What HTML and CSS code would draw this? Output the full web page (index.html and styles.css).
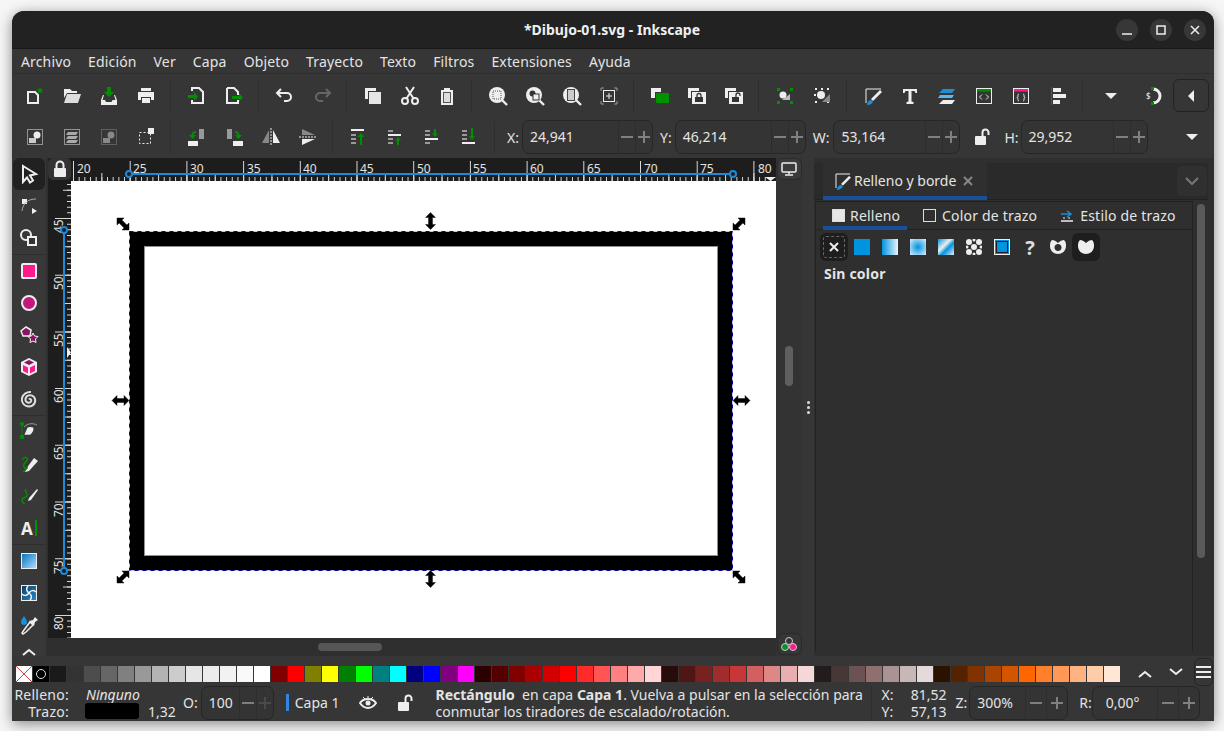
FILE: index.html
```html
<!DOCTYPE html>
<html lang="en">
<head>
    <meta charset="UTF-8">
    <meta name="viewport" content="width=device-width, initial-scale=1.0">
    <title>Inkscape</title>
    <link rel="stylesheet" href="styles.css">
</head>
<body>
    <svg class="defs" width="0" height="0">
        <defs>
            <g id="arrow"><path d="M-8.5 0L-3.5-5V-2H3.5V-5L8.5 0L3.500 5V2H-3.500V5Z" fill="#000" stroke="#000" stroke-width=".4"/></g>
            <g id="lens"><circle cx="9" cy="9" r="8"/><path d="M14 14l5 5" stroke="#eee" stroke-width="2.4"/></g>
            <g id="lockshape"><rect x="3" y="8" width="12" height="9" rx="1"/><path d="M5.5 8V5a3.5 3.5 0 0 1 7 0V8" fill="none" stroke="#eee" stroke-width="2"/></g>
            <g id="openlock"><rect x="2" y="8" width="11" height="9" rx="1"/><path d="M9.5 8V4.5a3 3 0 0 1 6 0V7" fill="none" stroke="#eee" stroke-width="2"/></g>
        </defs>
    </svg>

    <div class="window">
        <header class="titlebar">
            <span class="title">*Dibujo-01.svg - Inkscape</span>
            <div class="win-buttons">
                <span class="win-btn"><svg width="12" height="12"><path d="M1 10h10" stroke="#eee" stroke-width="1.5"/></svg></span>
                <span class="win-btn"><svg width="12" height="12"><rect x="2" y="2" width="8" height="8" fill="none" stroke="#eee" stroke-width="1.5"/></svg></span>
                <span class="win-btn"><svg width="12" height="12"><path d="M2 2l8 8M10 2l-8 8" stroke="#eee" stroke-width="1.5"/></svg></span>
            </div>
        </header>

        <nav class="menubar">
            <span>Archivo</span><span>Edición</span><span>Ver</span><span>Capa</span><span>Objeto</span><span>Trayecto</span><span>Texto</span><span>Filtros</span><span>Extensiones</span><span>Ayuda</span>
        </nav>

        <div class="toolbar commands">
            <span class="tb"><svg width="20" height="20"><path d="M3 6h7l3 3v8H3z" fill="none" stroke="#eee" stroke-width="2"/><path d="M15 1l1 2.500h2.500l-2 1.700.8 2.600-2.300-1.500-2.300 1.500.8-2.600-2-1.700H14z" fill="#008f00"/></svg></span>
            <span class="tb"><svg width="20" height="20"><path d="M2 3h6l2 2h5v2H5L2 12z" fill="#eee"/><path d="M5 8h14l-3 9H2z" fill="#ddd"/></svg></span>
            <span class="tb"><svg width="20" height="20"><path d="M8 1h4v5h3l-5 5-5-5h3z" fill="#008f00"/><path d="M4 9l-2 5v5h16v-5l-2-5h-1l1.500 5h-3l-1 2H7l-1-2H3.500L5 9z" fill="#eee"/></svg></span>
            <span class="tb"><svg width="20" height="20"><path d="M5 2h10v3H5zM2 6h16v8h-3v-3H5v3H2zM6 12h8v5H6z" fill="#eee"/></svg></span>
            <i class="sep"></i>
            <span class="tb"><svg width="20" height="20"><path d="M5 5V2h7l4 4v11H5v-3" fill="none" stroke="#eee" stroke-width="2"/><path d="M1 9h6V6l4 4.500L7 15v-3H1z" fill="#008f00"/></svg></span>
            <span class="tb"><svg width="20" height="20"><path d="M3 2h7l4 4v3M14 14v3H3V2" fill="none" stroke="#eee" stroke-width="2"/><path d="M8 10h7V7l4 4.500L15 16v-3H8z" fill="#008f00"/></svg></span>
            <i class="sep"></i>
            <span class="tb"><svg width="20" height="20"><path d="M6 3L2 7l4 4M2 7h10a4 4 0 0 1 0 8H9" fill="none" stroke="#eee" stroke-width="2"/></svg></span>
            <span class="tb"><svg width="20" height="20"><path d="M14 3l4 4-4 4M18 7H8a4 4 0 0 0 0 8h3" fill="none" stroke="#666" stroke-width="2"/></svg></span>
            <i class="sep"></i>
            <span class="tb"><svg width="20" height="20"><path d="M2 2h11v3H5v8H2z" fill="#eee"/><path d="M6 6h12v12H6z" fill="#e6e6e6"/></svg></span>
            <span class="tb"><svg width="20" height="20"><circle cx="5" cy="15" r="3" fill="none" stroke="#eee" stroke-width="2"/><circle cx="15" cy="15" r="3" fill="none" stroke="#eee" stroke-width="2"/><path d="M6.500 12.500L14 1M13.500 12.500L6 1" stroke="#eee" stroke-width="2"/></svg></span>
            <span class="tb"><svg width="20" height="20"><path d="M7 2h6v2h3v15H4V4h3z" fill="#eee"/><path d="M6 6h8v11H6z" fill="#555"/><path d="M7 7h6v9H7z" fill="#ddd"/></svg></span>
            <i class="sep"></i>
            <span class="tb"><svg width="20" height="20"><use href="#lens" fill="#eee"/><rect x="5" y="5" width="8" height="8" fill="none" stroke="#555" stroke-dasharray="1 1"/></svg></span>
            <span class="tb"><svg width="20" height="20"><use href="#lens" fill="#eee"/><circle cx="7.500" cy="7.500" r="3" fill="#333"/><rect x="8" y="8" width="6" height="6" fill="#eee" stroke="#333"/></svg></span>
            <span class="tb"><svg width="20" height="20"><use href="#lens" fill="#eee"/><rect x="5.500" y="3.500" width="7" height="11" fill="#ccc" stroke="#444"/></svg></span>
            <span class="tb"><svg width="20" height="20"><path d="M2 5V2h3M15 2h3v3M18 15v3h-3M5 18H2v-3" fill="none" stroke="#999"/><rect x="4.500" y="4.500" width="11" height="11" fill="none" stroke="#eee"/><path d="M7 10h6M10 7v6" stroke="#eee"/></svg></span>
            <i class="sep"></i>
            <span class="tb"><svg width="20" height="20"><path d="M1 2h10v4H5v6H1z" fill="#eee"/><path d="M6 7h13v10H6z" fill="#009100"/></svg></span>
            <span class="tb"><svg width="20" height="20"><path d="M1 2h11v3H4v7H1z" fill="#eee"/><path d="M5 6h14v12H5z" fill="#eee"/><rect x="8" y="11" width="8" height="5" fill="#333"/><path d="M10 11V9.500a2 2 0 0 1 4 0V11" fill="none" stroke="#333" stroke-width="1.300"/></svg></span>
            <span class="tb"><svg width="20" height="20"><path d="M1 2h11v3H4v7H1z" fill="#eee"/><path d="M5 6h14v12H5z" fill="#eee"/><rect x="8" y="11" width="7" height="5" fill="#333"/><path d="M12 11V9a2 2 0 0 1 4 0v1" fill="none" stroke="#333" stroke-width="1.300"/></svg></span>
            <i class="sep"></i>
            <span class="tb"><svg width="20" height="20"><path d="M2 2h3v3H2zM15 2h3v3h-3zM2 15h3v3H2zM15 15h3v3h-3z" fill="#009100"/><circle cx="8" cy="9" r="3.500" fill="#eee"/><path d="M15 8v6H7z" fill="#bbb"/></svg></span>
            <span class="tb"><svg width="20" height="20"><path d="M3 3h2M15 3h2M3 16h2M15 16h2M2 9h2M10 2v2" stroke="#eee" stroke-width="2"/><circle cx="9" cy="9" r="4" fill="#eee"/><path d="M18 8v8h-8z" fill="#888"/></svg></span>
            <i class="sep"></i>
            <span class="tb"><svg width="20" height="20"><path d="M3 17V3h15" fill="none" stroke="#eee" stroke-width="1"/><path d="M8 13L17 4l2 2-9 9z" fill="#eee"/><path d="M4 19c0-3 2-5 4-5l2 2c-1 2-3 3-6 3z" fill="#1c8fd6"/></svg></span>
            <span class="tb"><svg width="20" height="20"><path d="M3 3h14v4h-1.500l-1-2H11.500v10.500l2 .5V18H6.500v-2l2-.5V5H5.500l-1 2H3z" fill="#eee"/></svg></span>
            <span class="tb"><svg width="20" height="20"><path d="M6 3h12l-3 4H2z" fill="#1c8fd6"/><path d="M3 9h14l-2 3H1z" fill="#5bb8ee"/><path d="M6 14h12l-3 4H2z" fill="#eee"/></svg></span>
            <span class="tb"><svg width="20" height="20"><rect x="2.500" y="2.500" width="15" height="15" fill="none" stroke="#eee"/><path d="M3 3h14v2.500H3z" fill="#008f00"/><path d="M8 8.500L5.500 11 8 13.500M12 8.500l2.500 2.500-2.500 2.500" fill="none" stroke="#ddd"/></svg></span>
            <span class="tb"><svg width="20" height="20"><rect x="2.500" y="2.500" width="15" height="15" fill="none" stroke="#eee"/><path d="M3 3h14v2.500H3z" fill="#ff1a8c"/><path d="M8 8c-1.500 0-1 2-1 3-.5 0-1 .3-1 .5s.5.500 1 .5c0 1-.5 3 1 3M12 8c1.500 0 1 2 1 3 .5 0 1 .3 1 .5s-.5.500-1 .5c0 1 .5 3-1 3" fill="none" stroke="#ddd"/></svg></span>
            <span class="tb"><svg width="20" height="20"><path d="M3.500 1v18" stroke="#008f00"/><path d="M5 2h8v4H5zM5 8h13v4H5zM5 14h7v4H5z" fill="#eee"/></svg></span>
            <i class="sep"></i>
            <span class="tb caret-btn"><svg width="14" height="8"><path d="M1 1h12L7 7z" fill="#eee"/></svg></span>
            <span class="tb snap"><svg width="20" height="20"><path d="M9 3a7 7 0 0 1 0 14" fill="none" stroke="#eee" stroke-width="3"/><path d="M7 1h3v3H7zM7 16h3v3H7z" fill="#008f00"/><text x="2" y="13" class="snap-s">$</text></svg></span>
            <span class="side-toggle"><svg width="8" height="14"><path d="M7 1v12L1 7z" fill="#eee"/></svg></span>
        </div>

        <div class="toolbar selectbar">
            <span class="tb"><svg width="20" height="20"><rect x="2.500" y="2.500" width="15" height="15" fill="none" stroke="#eee" stroke-dasharray="1 1"/><circle cx="12" cy="8" r="3.500" fill="#eee"/><path d="M4 11h7v5H4z" fill="#ccc"/></svg></span>
            <span class="tb"><svg width="20" height="20"><rect x="2.500" y="2.500" width="15" height="15" fill="none" stroke="#eee" stroke-dasharray="1 1"/><path d="M6 5h10l-2 3H4zM6 9h10l-2 3H4zM6 13h10l-2 3H4z" fill="#aaa"/></svg></span>
            <span class="tb"><svg width="20" height="20"><rect x="2.500" y="2.500" width="15" height="15" fill="none" stroke="#888" stroke-dasharray="1 1"/><circle cx="12" cy="8" r="3.500" fill="#888"/><path d="M4 11h7v5H4z" fill="#888"/></svg></span>
            <span class="tb"><svg width="20" height="20"><rect x="3.500" y="5.500" width="11" height="11" fill="none" stroke="#eee" stroke-dasharray="2 2"/><path d="M12 1h6v6h-6z" fill="#eee"/></svg></span>
            <i class="sep"></i>
            <span class="tb"><svg width="20" height="20"><path d="M1 14h10v5H1z" fill="#eee"/><path d="M12 2h5v10h-5z" fill="#999"/><path d="M9 4C6 4 4.500 6 4.500 8H2l3.500 4L9 8H6.500C6.500 7 7.500 6 9 6z" fill="#008f00"/></svg></span>
            <span class="tb"><svg width="20" height="20"><path d="M9 14h10v5H9z" fill="#eee"/><path d="M3 2h5v10H3z" fill="#999"/><path d="M11 4c3 0 4.500 2 4.500 4H18l-3.500 4L11 8h2.500c0-1-1-2-2.500-2z" fill="#008f00"/></svg></span>
            <span class="tb"><svg width="20" height="20"><path d="M8 3v13H1z" fill="#888"/><path d="M12 3v13h7z" fill="#eee"/><path d="M10 1v18" stroke="#eee" stroke-dasharray="2 1"/></svg></span>
            <span class="tb"><svg width="20" height="20"><path d="M4 2l13 6H4z" fill="#888"/><path d="M4 18l13-6H4z" fill="#eee"/><path d="M1 10h18" stroke="#eee" stroke-dasharray="2 1"/></svg></span>
            <i class="sep"></i>
            <span class="tb"><svg width="20" height="20"><path d="M2 2h13v2H2z" fill="#eee"/><path d="M2 7h5v2H2zM2 11h5v2H2zM2 15h5v2H2z" fill="#999"/><path d="M12 6l3.500 4H13v8h-2v-8H8.500z" fill="#008f00"/></svg></span>
            <span class="tb"><svg width="20" height="20"><path d="M2 7h13v2H2z" fill="#eee"/><path d="M2 3h5v2H2zM2 11h5v2H2zM2 15h5v2H2z" fill="#999"/><path d="M12 10l3 3.500h-2V18h-2v-4.500H9z" fill="#008f00"/></svg></span>
            <span class="tb"><svg width="20" height="20"><path d="M2 11h13v2H2z" fill="#eee"/><path d="M2 3h5v2H2zM2 7h5v2H2zM2 15h5v2H2z" fill="#999"/><path d="M11 2h2v4.500h2l-3 3.500-3-3.500h2z" fill="#008f00"/></svg></span>
            <span class="tb"><svg width="20" height="20"><path d="M2 15h13v2H2z" fill="#eee"/><path d="M2 3h5v2H2zM2 7h5v2H2zM2 11h5v2H2z" fill="#999"/><path d="M11 1h2v8h2l-3 4-3-4h2z" fill="#008f00"/></svg></span>
            <i class="sep"></i>
            <label class="coord-x">X:</label>
            <div class="spin"><span class="val">24,941</span><span class="btn minus"></span><span class="btn plus"></span></div>
            <label class="coord-y">Y:</label>
            <div class="spin"><span class="val">46,214</span><span class="btn minus"></span><span class="btn plus"></span></div>
            <label class="coord-w">W:</label>
            <div class="spin narrow"><span class="val">53,164</span><span class="btn minus"></span><span class="btn plus"></span></div>
            <span class="ratio-lock"><svg width="18" height="18"><use href="#openlock" fill="#eee"/></svg></span>
            <label class="coord-h">H:</label>
            <div class="spin narrow"><span class="val">29,952</span><span class="btn minus"></span><span class="btn plus"></span></div>
            <span class="more"><svg width="14" height="8"><path d="M1 1h12L7 7z" fill="#eee"/></svg></span>
        </div>

        <main class="main">
            <aside class="toolbox">
                <span class="tool active"><svg width="20" height="20"><path d="M4 2l13 8-6 1.500 3 5-3 2-3-5L4 18z" fill="none" stroke="#eee" stroke-width="2"/></svg></span>
                <span class="tool"><svg width="20" height="20"><path d="M3 3h5v5H3z" fill="#eee"/><path d="M3 15C4 7 9 3 17 3" fill="none" stroke="#aaa"/><path d="M13 12l5 3-5 3z" fill="#eee"/></svg></span>
                <span class="tool"><svg width="20" height="20"><circle cx="7" cy="7" r="5" fill="none" stroke="#eee" stroke-width="2"/><path d="M9 9h8v8H9z" fill="#333" stroke="#eee" stroke-width="2"/></svg></span>
                <i class="tool-sep"></i>
                <span class="tool"><svg width="20" height="20"><rect x="3" y="3" width="14" height="14" rx="1" fill="#ff1a8c" stroke="#eee" stroke-width="2"/></svg></span>
                <span class="tool"><svg width="20" height="20"><circle cx="10" cy="10" r="7" fill="#c2187c" stroke="#eee" stroke-width="2"/></svg></span>
                <span class="tool"><svg width="20" height="20"><path d="M7 2l5 3-1 6H4L2 6z" fill="#8a1464" stroke="#eee" stroke-width="1.500"/><path d="M14 8l1.500 3 3.500.5-2.500 2.500.5 3.500-3-1.500-3 1.500.5-3.500-2.500-2.500 3.500-.5z" fill="#8a1464" stroke="#eee"/></svg></span>
                <span class="tool"><svg width="20" height="20"><path d="M10 1l8 4v10l-8 4-8-4V5z" fill="#eee"/><path d="M10 3l5 2.500-5 2.500-5-2.500z" fill="#8a1464"/><path d="M4 8l5 2.500v6L4 14z" fill="#ff1a8c"/><path d="M16 8l-5 2.500v6l5-2.500z" fill="#ff1a8c"/></svg></span>
                <span class="tool"><svg width="20" height="20"><path d="M10 10.500c1-1.500 3 0 2 2-1.500 2.500-6 1-5.500-2.500C7 6 12 5 15 8c3 4 0 9.500-5 9.500C5 17.500 2 13 3 9 4 5 8 2.500 12 3" fill="none" stroke="#ddd" stroke-width="2"/></svg></span>
                <i class="tool-sep"></i>
                <span class="tool"><svg width="20" height="20"><path d="M3 16l4-9c2-1 5-1 7 0 1 3-1 7-4 9z" fill="#eee" transform="translate(3 0) scale(.8)"/><path d="M5 5c4-4 9-4 13-2" fill="none" stroke="#999"/><circle cx="3" cy="2" r="2" fill="#008f00"/><rect x="1" y="13" width="4" height="4" fill="#008f00"/><path d="M3 3v11" stroke="#008f00"/></svg></span>
                <span class="tool"><svg width="20" height="20"><path d="M7 15l8-11 4 3-9 10-4 1z" fill="#eee"/><path d="M3 6c3-4 6-3 5 0S3 10 5 13s4 0 3 1-2 3-4 4" fill="none" stroke="#008f00" stroke-width="1.500"/></svg></span>
                <span class="tool"><svg width="20" height="20"><path d="M10 12l8-9 1 1-7 10-3 1z" fill="#eee"/><path d="M7 3c-2 3 2 4 1 7-1 2-5 1-5 4s2 3 3 4" fill="none" stroke="#008f00" stroke-width="1.500"/></svg></span>
                <span class="tool text-tool"><b>A</b><i></i></span>
                <i class="tool-sep"></i>
                <span class="tool"><span class="grad-tool"></span></span>
                <span class="tool"><svg width="20" height="20"><defs><linearGradient id="meshfill" x1="0" y1="0" x2="1" y2="1"><stop offset="0" stop-color="#0f3a5c"/><stop offset="1" stop-color="#2a8ad0"/></linearGradient></defs><rect x="2.500" y="2.500" width="15" height="15" fill="url(#meshfill)" stroke="#eee"/><path d="M10 10C7 8 7 5 9 3M10 10c2-3 5-3 7-1M10 10c3 2 3 5 1 7M10 10c-2 3-5 3-7 1" fill="none" stroke="#f0f8ff" stroke-width="1.500"/></svg></span>
                <span class="tool"><svg width="20" height="20"><path d="M5 1c2 3 3 4 3 6a3 3 0 0 1-6 0c0-2 1-3 3-6z" fill="#1c8fd6"/><path d="M11 7l3 3-7 7-3 2-1-1 2-3z" fill="none" stroke="#eee" stroke-width="1.500"/><path d="M10 6l4-1 2-3 3 3-3 2-1 4z" fill="#eee"/></svg></span>
                <span class="tool tool-more"><svg width="14" height="8"><path d="M1 7l6-5 6 5" fill="none" stroke="#eee" stroke-width="2"/></svg></span>
            </aside>

            <section class="workspace">
                <span class="lock-btn"><svg width="18" height="18"><use href="#lockshape" fill="#eee"/></svg></span>
                <svg class="h-ruler" width="705" height="23" viewBox="71 158 705 23">
                    <line x1="73" y1="179" x2="776" y2="179" class="tick" stroke-width="4" stroke-dasharray="1 4.67"/>
                    <line x1="73" y1="177" x2="776" y2="177" class="tick" stroke-width="8" stroke-dasharray="1 27.35"/>
                    <line x1="73" y1="171" x2="776" y2="171" class="tick" stroke-width="20" stroke-dasharray="1 55.7"/>
                    <text x="77" y="173">20</text><text x="133" y="173">25</text><text x="190" y="173">30</text><text x="247" y="173">35</text><text x="303" y="173">40</text><text x="360" y="173">45</text><text x="417" y="173">50</text><text x="473" y="173">55</text><text x="530" y="173">60</text><text x="587" y="173">65</text><text x="644" y="173">70</text><text x="700" y="173">75</text><text x="758" y="173">80</text>
                    <path d="M129 174H733" stroke="#1c8ad6" stroke-width="2"/>
                    <circle cx="129" cy="174" r="3" fill="#1d1d1d" stroke="#1c8ad6" stroke-width="2"/>
                    <circle cx="733" cy="174" r="3" fill="#1d1d1d" stroke="#1c8ad6" stroke-width="2"/>
                    <path d="M765 177h11l-5.500 4z" fill="#eee"/>
                </svg>
                <svg class="v-ruler" width="23" height="457" viewBox="48 181 23 457">
                    <line x1="69" y1="161.300" x2="69" y2="638" class="tick" stroke-width="4" stroke-dasharray="1 4.67"/>
                    <line x1="67" y1="161.300" x2="67" y2="638" class="tick" stroke-width="8" stroke-dasharray="1 27.35"/>
                    <line x1="63" y1="161.300" x2="63" y2="638" class="tick" stroke-width="16" stroke-dasharray="1 55.7"/>
                    <text transform="translate(63 233) rotate(-90)">45</text><text transform="translate(63 290) rotate(-90)">50</text><text transform="translate(63 347) rotate(-90)">55</text><text transform="translate(63 403) rotate(-90)">60</text><text transform="translate(63 460) rotate(-90)">65</text><text transform="translate(63 517) rotate(-90)">70</text><text transform="translate(63 574) rotate(-90)">75</text><text transform="translate(63 630) rotate(-90)">80</text>
                    <path d="M64 230V571" stroke="#1c8ad6" stroke-width="2"/>
                    <circle cx="64" cy="230" r="3" fill="#1d1d1d" stroke="#1c8ad6" stroke-width="2"/>
                    <circle cx="64" cy="571" r="3" fill="#1d1d1d" stroke="#1c8ad6" stroke-width="2"/>
                    <path d="M67 347l4 5.500-4 5.500z" fill="#eee"/>
                </svg>
                <svg class="canvas" width="705" height="457" viewBox="71 181 705 457">
                    <rect x="71" y="181" width="705" height="457" fill="#fff"/>
                    <rect x="137" y="239" width="588" height="324" fill="#fff" stroke="#000" stroke-width="14"/>
                    <rect x="144.500" y="246.500" width="573" height="309" fill="none" stroke="#909090"/>
                    <rect x="129.500" y="231.500" width="603" height="339" fill="none" stroke="#c8c8c8"/>
                    <rect x="129.500" y="231.500" width="603" height="339" fill="none" stroke="#0000b0" stroke-dasharray="4 4"/>
                    <use href="#arrow" transform="translate(123 224) rotate(45)"/>
                    <use href="#arrow" transform="translate(739 224) rotate(-45)"/>
                    <use href="#arrow" transform="translate(123 577) rotate(-45)"/>
                    <use href="#arrow" transform="translate(739 577) rotate(45)"/>
                    <use href="#arrow" transform="translate(430.500 221) rotate(90)"/>
                    <use href="#arrow" transform="translate(430.500 579) rotate(90)"/>
                    <use href="#arrow" transform="translate(120.500 400.500)"/>
                    <use href="#arrow" transform="translate(741.500 400.500)"/>
                </svg>
                <div class="h-scroll"><span class="h-thumb"></span></div>
            </section>

            <div class="v-scroll">
                <span class="corner-btn"><svg width="16" height="14"><rect x="1" y="1" width="14" height="9" rx="1" fill="none" stroke="#eee" stroke-width="1.500"/><path d="M8 10v2M4 13h8" stroke="#eee" stroke-width="1.500"/></svg></span>
                <span class="v-thumb"></span>
                <span class="corner-btn cms"><svg width="18" height="16"><circle cx="9" cy="5" r="3.500" fill="none" stroke="#ccc"/><circle cx="5" cy="11" r="3.500" fill="#0a8f2a" stroke="#ccc"/><circle cx="13" cy="11" r="3.500" fill="#ff1a8c" stroke="#ccc"/></svg></span>
            </div>

            <div class="grip"><i></i><i></i><i></i></div>

            <section class="dock">
                <div class="dock-tabs">
                    <span class="dock-tab"><svg width="18" height="18"><path d="M2 16V2h14" fill="none" stroke="#eee"/><path d="M7 12l8-8 2 1.500-8 8z" fill="#eee"/><path d="M3 18c0-3 2-5 4-5l2 1.500C8 16 6 18 3 18z" fill="#1c8fd6"/></svg>Relleno y borde<svg class="tab-close" width="10" height="10"><path d="M1 1l8 8M9 1L1 9" stroke="#888" stroke-width="2"/></svg></span>
                    <span class="dock-collapse"><svg width="14" height="8"><path d="M1 1l6 6 6-6" fill="none" stroke="#777" stroke-width="2"/></svg></span>
                </div>
                <div class="dock-body">
                    <div class="notebook">
                        <div class="nb-tabs">
                            <span class="nb-tab current"><i class="check filled"></i>Relleno</span>
                            <span class="nb-tab"><i class="check"></i>Color de trazo</span>
                            <span class="nb-tab"><svg width="14" height="14"><path d="M1 5h9M7 2l4 3-4 3" fill="none" stroke="#1c8fd6" stroke-width="1.500"/><path d="M1 12h12" stroke="#eee" stroke-width="1.500"/><path d="M3 9h2M8 9h2" stroke="#eee"/></svg>Estilo de trazo</span>
                        </div>
                        <div class="paint-modes">
                            <span class="mode none-mode"><svg width="10" height="10"><path d="M1 1l8 8M9 1L1 9" stroke="#eee" stroke-width="2"/></svg></span>
                            <span class="mode"><i class="swatch flat"></i></span>
                            <span class="mode"><i class="swatch linear"></i></span>
                            <span class="mode"><i class="swatch radial"></i></span>
                            <span class="mode"><i class="swatch mesh"></i></span>
                            <span class="mode"><svg width="16" height="16"><g fill="#eee"><circle cx="3" cy="3" r="3"/><circle cx="13" cy="3" r="3"/><circle cx="8" cy="8" r="3"/><circle cx="3" cy="13" r="3"/><circle cx="13" cy="13" r="3"/><circle cx="8" cy="1" r="1.500"/><circle cx="8" cy="15" r="1.500"/><circle cx="1" cy="8" r="1.500"/><circle cx="15" cy="8" r="1.500"/></g></svg></span>
                            <span class="mode"><i class="swatch boxed"></i></span>
                            <span class="mode unknown">?</span>
                            <span class="mode"><svg width="16" height="16"><path fill-rule="evenodd" d="M2 1c2 0 4 1 6 3 2-2 4-3 6-3 2 2 2 4 2 6 0 5-4 8-8 8S0 12 0 7c0-2 0-4 2-6zM8 5c-2 0-3.500 1.500-3.500 3.500S6 12 8 12s3.500-1.500 3.500-3.500S10 5 8 5z" fill="#eee"/></svg></span>
                            <span class="mode picked"><svg width="16" height="16"><path d="M2 1c2 0 4 1 6 3 2-2 4-3 6-3 2 2 2 4 2 6 0 5-4 8-8 8S0 12 0 7c0-2 0-4 2-6z" fill="#eee"/></svg></span>
                        </div>
                        <p class="paint-label">Sin color</p>
                    </div>
                    <div class="dock-scroll"><span></span></div>
                </div>
            </section>
        </main>

        <div class="palette">
            <div class="swatches">
                <i class="none-swatch"><svg width="16" height="16"><path d="M0 0l16 16M16 0L0 16" stroke="#d04040"/></svg></i>
                <i class="black-swatch"><svg width="16" height="16"><circle cx="8" cy="8" r="4.500" fill="none" stroke="#ddd"/></svg></i>
                <i class="c1a1a1a"></i><i class="c333333"></i><i class="c4d4d4d"></i><i class="c666666"></i><i class="c808080"></i><i class="c999999"></i><i class="cb3b3b3"></i><i class="ccccccc"></i><i class="ce6e6e6"></i><i class="cececec"></i><i class="cf2f2f2"></i><i class="cf9f9f9"></i><i class="cffffff"></i>
                <i class="c800000"></i><i class="cff0000"></i><i class="c808000"></i><i class="cffff00"></i><i class="c008000"></i><i class="c00ff00"></i><i class="c008080"></i><i class="c00ffff"></i><i class="c000080"></i><i class="c0000ff"></i><i class="c800080"></i><i class="cff00ff"></i>
                <i class="c2b0000"></i><i class="c550000"></i><i class="c800000"></i><i class="caa0000"></i><i class="cd40000"></i><i class="cff0000"></i><i class="cff2a2a"></i><i class="cff5555"></i><i class="cff8080"></i><i class="cffaaaa"></i><i class="cffd5d5"></i>
                <i class="c280b0b"></i><i class="c501616"></i><i class="c782121"></i><i class="ca02c2c"></i><i class="cc83737"></i><i class="cd35f5f"></i><i class="cde8787"></i><i class="ce9afaf"></i><i class="cf4d7d7"></i>
                <i class="c241c1c"></i><i class="c483737"></i><i class="c6c5353"></i><i class="c916f6f"></i><i class="cac9393"></i><i class="cc8b7b7"></i><i class="ce3dbdb"></i>
                <i class="c2b1100"></i><i class="c552200"></i><i class="c803300"></i><i class="caa4400"></i><i class="cd45500"></i><i class="cff6600"></i><i class="cff7f2a"></i><i class="cff9955"></i><i class="cffb380"></i><i class="cffccaa"></i><i class="cffe6d5"></i>
            </div>
            <span class="pal-arrow up"><svg width="14" height="8"><path d="M1 7l6-5 6 5" fill="none" stroke="#eee" stroke-width="2"/></svg></span>
            <span class="pal-arrow down"><svg width="14" height="8"><path d="M1 1l6 5 6-5" fill="none" stroke="#eee" stroke-width="2"/></svg></span>
            <span class="pal-menu"><i></i><i></i><i></i></span>
        </div>

        <footer class="statusbar">
            <div class="style-info">
                <span class="key">Relleno:</span><em>Ninguno</em><span></span>
                <span class="key">Trazo:</span><i class="stroke-box"></i><span class="stroke-w">1,32</span>
            </div>
            <label class="o-label">O:</label>
            <div class="spin opacity"><span class="val">100</span><span class="btn minus"></span><span class="btn plus dim"></span></div>
            <i class="layer-bar"></i>
            <span class="layer-name">Capa 1</span>
            <span class="eye"><svg width="18" height="14"><path d="M1 7c2-3 5-4 8-4s6 1 8 4c-2 3-5 5-8 5S3 10 1 7z" fill="none" stroke="#eee" stroke-width="2"/><circle cx="9" cy="7" r="2.500" fill="#eee"/><path d="M4 1l2 2M14 1l-2 2M9 0v2" stroke="#eee"/></svg></span>
            <span class="layer-lock"><svg width="18" height="18"><use href="#openlock" fill="#eee"/></svg></span>
            <p class="message"><b>Rectángulo</b> &nbsp;en capa <b>Capa 1</b>. Vuelva a pulsar en la selección para<br>conmutar los tiradores de escalado/rotación.</p>
            <div class="cursor">
                <span>X:</span><span class="num">81,52</span>
                <span>Y:</span><span class="num">57,13</span>
            </div>
            <label class="z-label">Z:</label>
            <div class="spin zoom"><span class="val">300%</span><span class="btn minus"></span><span class="btn plus"></span></div>
            <label class="r-label">R:</label>
            <div class="spin rotate"><span class="val">0,00°</span><span class="btn minus"></span><span class="btn plus"></span></div>
        </footer>
    </div>
</body>
</html>
```

FILE: styles.css
```css
* {
    box-sizing: border-box;
}

html, body {
    height: 100%;
}

body {
    margin: 0;
    padding: 11px 10px 10px 12px;
    background: #f6f6f6;
    font-family: "Noto Sans", sans-serif;
    font-size: 14px;
    color: #e4e4e4;
    overflow: hidden;
}

.defs {
    display: block;
    height: 0;
}

i {
    font-style: normal;
}

.window {
    width: 1202px;
    height: 710px;
    display: flex;
    flex-direction: column;
    background: #363636;
    border-radius: 12px 12px 0 0;
    box-shadow: 0 3px 14px rgba(0, 0, 0, 0.45);
    overflow: hidden;
}

.titlebar {
    height: 38px;
    flex: none;
    display: flex;
    align-items: center;
    justify-content: center;
    background: #222;
    border-bottom: 1px solid #191919;
    position: relative;
}

.title {
    font-weight: 700;
    color: #f0f0f0;
    padding-right: 2px;
}

.win-buttons {
    position: absolute;
    right: 8px;
    top: 8px;
    display: flex;
    gap: 12px;
}

.win-btn {
    width: 22px;
    height: 22px;
    border-radius: 50%;
    background: #373737;
    display: flex;
    align-items: center;
    justify-content: center;
}

.menubar {
    height: 25px;
    flex: none;
    display: flex;
    align-items: center;
    gap: 17px;
    padding-left: 9px;
    letter-spacing: 0.15px;
    border-bottom: 1px solid #2e2e2e;
}

.toolbar {
    flex: none;
    display: flex;
    align-items: center;
    padding-left: 4px;
}

.commands {
    height: 43px;
}

.selectbar {
    height: 41px;
    padding-bottom: 1px;
}

.tb {
    width: 37px;
    height: 32px;
    flex: none;
    display: flex;
    align-items: center;
    justify-content: center;
}

.sep {
    width: 1px;
    height: 32px;
    margin: 0 7px 0 6px;
    flex: none;
    background: #2e2e2e;
}

.caret-btn {
    margin-left: 2px;
}

.snap {
    margin-left: 6px;
}

.snap-s {
    font-size: 8px;
    fill: #eee;
}

.side-toggle {
    width: 36px;
    height: 33px;
    margin-left: 1px;
    border: 1px solid #222;
    border-radius: 6px;
    display: flex;
    align-items: center;
    justify-content: center;
}

.selectbar label {
    flex: none;
}

.coord-x {
    margin: 0 3px 0 5px;
}

.coord-y {
    margin: 0 3px 0 7px;
}

.coord-w {
    margin: 0 4px 0 7px;
}

.coord-h {
    margin: 0 2px 0 13px;
}

.spin {
    width: 131px;
    height: 34px;
    flex: none;
    display: flex;
    border: 1px solid #262626;
    border-radius: 7px;
    background: #343434;
}

.spin.narrow {
    width: 127px;
}

.spin .val {
    flex: 1;
    padding-left: 7px;
    line-height: 31px;
}

.spin .btn {
    width: 17px;
    border-left: 1px solid #2e2e2e;
    position: relative;
}

.btn::before, .plus::after {
    content: "";
    position: absolute;
    left: 2px;
    top: 15px;
    width: 12px;
    height: 2px;
    background: #808080;
}

.plus::after {
    left: 7px;
    top: 10px;
    width: 2px;
    height: 12px;
}

.plus.dim::before, .plus.dim::after {
    background: #4a4a4a;
}

.ratio-lock {
    display: flex;
    margin-left: 13px;
}

.more {
    display: flex;
    margin-left: 37px;
}

.main {
    height: 498px;
    flex: none;
    display: flex;
    background: #2f2f2f;
}

.toolbox {
    width: 34px;
    flex: none;
    margin-right: 2px;
    display: flex;
    flex-direction: column;
    background: #383838;
}

.tool {
    height: 32px;
    flex: none;
    display: flex;
    align-items: center;
    justify-content: center;
}

.tool.active {
    background: #212121;
    border-radius: 6px;
    margin: 0 1px;
}

.tool.tool-more {
    height: 15px;
    align-items: flex-end;
}

.tool-sep {
    height: 1px;
    flex: none;
    background: #2e2e2e;
}

.text-tool b {
    font-size: 17px;
    color: #eee;
}

.text-tool i {
    width: 2px;
    height: 16px;
    margin-left: 2px;
    background: #009100;
}

.grad-tool {
    width: 16px;
    height: 16px;
    border: 1px solid #eee;
    background: linear-gradient(135deg, #0a74c0, #a8dcff);
}

.workspace {
    width: 728px;
    flex: none;
    display: grid;
    grid-template-columns: 23px 705px;
    grid-template-rows: 23px 457px 18px;
    background: #1d1d1d;
}

.lock-btn {
    display: flex;
    align-items: center;
    justify-content: center;
    background: #333;
    border-radius: 5px;
    margin-bottom: 1px;
}

.h-ruler, .v-ruler {
    display: block;
    background: #1d1d1d;
}

.h-ruler text, .v-ruler text {
    font-size: 12px;
    fill: #e2e2e2;
}

.tick {
    stroke: #d8d8d8;
}

.canvas {
    display: block;
}

.h-scroll {
    grid-column: 1 / 3;
    padding: 5px 0 0 270px;
    background: #2f2f2f;
}

.h-thumb {
    display: block;
    width: 64px;
    height: 8px;
    border-radius: 4px;
    background: #565656;
}

.v-scroll {
    width: 26px;
    flex: none;
    display: flex;
    flex-direction: column;
    align-items: center;
    background: #333;
    padding-bottom: 1px;
}

.corner-btn {
    width: 25px;
    height: 22px;
    flex: none;
    display: flex;
    align-items: center;
    justify-content: center;
    border: 1px solid #2a2a2a;
    border-radius: 6px;
    background: #3a3a3a;
}

.v-thumb {
    width: 8px;
    height: 40px;
    margin-top: 166px;
    border-radius: 4px;
    background: #5f5f5f;
}

.cms {
    margin-top: auto;
    background: #363636;
}

.grip {
    width: 12px;
    flex: none;
    display: flex;
    flex-direction: column;
    align-items: center;
    justify-content: center;
    gap: 2px;
    background: #363636;
}

.grip i {
    width: 3px;
    height: 3px;
    border-radius: 50%;
    background: #ddd;
}

.dock {
    width: 394px;
    flex: none;
    padding-top: 5px;
}

.dock-tabs {
    height: 37px;
    display: flex;
    padding-left: 9px;
    background: #2a2a2a;
    border-bottom: 1px solid #222;
}

.dock-tab {
    width: 164px;
    height: 37px;
    display: flex;
    align-items: center;
    gap: 2px;
    padding: 2px 0 0 11px;
    background: #2f2f2f;
    border-bottom: 4px solid #1a4f9c;
}

.tab-close {
    margin-left: 5px;
}

.dock-collapse {
    width: 30px;
    height: 30px;
    margin: 3px 1px 0 auto;
    display: flex;
    align-items: center;
    justify-content: center;
    border-radius: 5px;
    background: #303030;
}

.dock-body {
    height: 451px;
    display: flex;
    background: #2f2f2f;
    padding-top: 1px;
}

.notebook {
    width: 378px;
    flex: none;
    margin-left: 1px;
    border: 1px solid #222;
    border-bottom: 0;
}

.nb-tabs {
    height: 28px;
    display: flex;
    padding-left: 7px;
    letter-spacing: 0.2px;
    border-bottom: 1px solid #222;
}

.nb-tab {
    height: 28px;
    display: flex;
    align-items: center;
    gap: 6px;
    padding: 3px 14px 4px 9px;
}

.nb-tab.current {
    width: 84px;
    gap: 5px;
    padding-right: 0;
    padding-bottom: 0;
    border-bottom: 4px solid #1a4f9c;
    margin-right: 7px;
}

.check {
    width: 13px;
    height: 13px;
    border: 1px solid #ddd;
}

.check.filled {
    background: #e6e6e6;
}

.paint-modes {
    display: flex;
    margin: 3px 0 0 4px;
}

.mode {
    width: 28px;
    height: 28px;
    flex: none;
    display: flex;
    align-items: center;
    justify-content: center;
    border-radius: 6px;
}

.none-mode {
    background: #1e1e1e;
    outline: 1px dashed #666;
    outline-offset: -4px;
}

.picked {
    background: #1e1e1e;
}

.unknown {
    font-size: 20px;
    font-weight: 700;
    color: #ddd;
}

.swatch {
    width: 16px;
    height: 16px;
    display: block;
}

.flat {
    background: #0093e0;
}

.linear {
    background: linear-gradient(90deg, #0093e0, #eaf5fc);
}

.radial {
    background: radial-gradient(circle, #0093e0, #dceefa);
}

.mesh {
    background: linear-gradient(135deg, #0093e0, #eee 40%, #0093e0 60%, #eee);
}

.boxed {
    background: #0093e0;
    border: 1px solid #eee;
    outline: 1px solid #1e1e1e;
    outline-offset: -3px;
}

.paint-label {
    margin: 3px 0 0 8px;
    font-weight: 700;
    letter-spacing: 0.2px;
}

.dock-scroll {
    flex: 1;
    padding: 3px 0 0 4px;
}

.dock-scroll span {
    display: block;
    width: 8px;
    height: 354px;
    border-radius: 4px;
    background: #5a5a5a;
}

.palette {
    height: 30px;
    flex: none;
    display: flex;
    align-items: center;
    padding-left: 4px;
    background: #363636;
}

.swatches {
    width: 1105px;
    height: 16px;
    margin-top: 6px;
    flex: none;
    display: flex;
    gap: 1px;
}

.swatches i {
    width: 16px;
    height: 16px;
    flex: none;
    display: block;
}

.swatches svg {
    display: block;
}

.none-swatch { background: #fff; }
.black-swatch { background: #000; }
.c1a1a1a { background: #1a1a1a; }
.c333333 { background: #333333; }
.c4d4d4d { background: #4d4d4d; }
.c666666 { background: #666666; }
.c808080 { background: #808080; }
.c999999 { background: #999999; }
.cb3b3b3 { background: #b3b3b3; }
.ccccccc { background: #cccccc; }
.ce6e6e6 { background: #e6e6e6; }
.cececec { background: #ececec; }
.cf2f2f2 { background: #f2f2f2; }
.cf9f9f9 { background: #f9f9f9; }
.cffffff { background: #ffffff; }
.c800000 { background: #800000; }
.cff0000 { background: #ff0000; }
.c808000 { background: #808000; }
.cffff00 { background: #ffff00; }
.c008000 { background: #008000; }
.c00ff00 { background: #00ff00; }
.c008080 { background: #008080; }
.c00ffff { background: #00ffff; }
.c000080 { background: #000080; }
.c0000ff { background: #0000ff; }
.c800080 { background: #800080; }
.cff00ff { background: #ff00ff; }
.c2b0000 { background: #2b0000; }
.c550000 { background: #550000; }
.caa0000 { background: #aa0000; }
.cd40000 { background: #d40000; }
.cff2a2a { background: #ff2a2a; }
.cff5555 { background: #ff5555; }
.cff8080 { background: #ff8080; }
.cffaaaa { background: #ffaaaa; }
.cffd5d5 { background: #ffd5d5; }
.c280b0b { background: #280b0b; }
.c501616 { background: #501616; }
.c782121 { background: #782121; }
.ca02c2c { background: #a02c2c; }
.cc83737 { background: #c83737; }
.cd35f5f { background: #d35f5f; }
.cde8787 { background: #de8787; }
.ce9afaf { background: #e9afaf; }
.cf4d7d7 { background: #f4d7d7; }
.c241c1c { background: #241c1c; }
.c483737 { background: #483737; }
.c6c5353 { background: #6c5353; }
.c916f6f { background: #916f6f; }
.cac9393 { background: #ac9393; }
.cc8b7b7 { background: #c8b7b7; }
.ce3dbdb { background: #e3dbdb; }
.c2b1100 { background: #2b1100; }
.c552200 { background: #552200; }
.c803300 { background: #803300; }
.caa4400 { background: #aa4400; }
.cd45500 { background: #d45500; }
.cff6600 { background: #ff6600; }
.cff7f2a { background: #ff7f2a; }
.cff9955 { background: #ff9955; }
.cffb380 { background: #ffb380; }
.cffccaa { background: #ffccaa; }
.cffe6d5 { background: #ffe6d5; }

.pal-arrow {
    width: 31px;
    flex: none;
    display: flex;
    justify-content: center;
}

.pal-arrow.up {
    margin: 6px 0 0 8px;
}

.pal-arrow.down {
    margin-top: 2px;
}

.pal-menu {
    width: 19px;
    height: 28px;
    margin: 1px 0 0 3px;
    display: flex;
    flex-direction: column;
    justify-content: center;
    align-items: center;
    gap: 3px;
    border: 1px solid #262626;
    border-radius: 6px;
}

.pal-menu i {
    width: 15px;
    height: 2px;
    background: #eee;
}

.statusbar {
    height: 35px;
    flex: none;
    display: flex;
    align-items: center;
    padding-bottom: 2px;
    line-height: 17px;
}

.style-info {
    width: 166px;
    flex: none;
    display: grid;
    grid-template-columns: 57px 79px 30px;
    grid-auto-rows: 17px;
    align-items: center;
}

.key {
    text-align: right;
    letter-spacing: 0.25px;
}

.style-info em {
    margin-left: 17px;
}

.stroke-box {
    width: 54px;
    height: 16px;
    margin-left: 16px;
    border-radius: 3px;
    background: #000;
}

.o-label {
    margin: 0 3px 0 5px;
}

.statusbar .spin {
    height: 34px;
    align-self: flex-start;
}

.spin.opacity {
    width: 73px;
}

.layer-bar {
    width: 3px;
    height: 17px;
    margin-left: 12px;
    background: #3584e4;
}

.layer-name {
    margin-left: 6px;
}

.eye {
    display: flex;
    margin-left: 19px;
}

.layer-lock {
    display: flex;
    margin-left: 19px;
}

.message {
    width: 435px;
    flex: none;
    margin: 0 0 0 22px;
}

.cursor {
    width: 75px;
    height: 35px;
    flex: none;
    align-self: flex-start;
    display: grid;
    grid-template-columns: 20px 45px;
    grid-auto-rows: 17px;
    padding-left: 10px;
    border-left: 1px solid #2e2e2e;
}

.num {
    text-align: right;
}

.z-label {
    margin: 0 2px 0 10px;
}

.spin.zoom {
    width: 99px;
}

.spin.zoom .btn, .spin.rotate .btn {
    width: 21px;
}

.spin.zoom .btn::before, .spin.rotate .btn::before {
    left: 4px;
}

.spin.zoom .plus::after, .spin.rotate .plus::after {
    left: 9px;
}

.r-label {
    margin: 0 0 0 11px;
}

.spin.rotate {
    width: 108px;
}

.spin.rotate .val {
    padding-left: 13px;
}
```
